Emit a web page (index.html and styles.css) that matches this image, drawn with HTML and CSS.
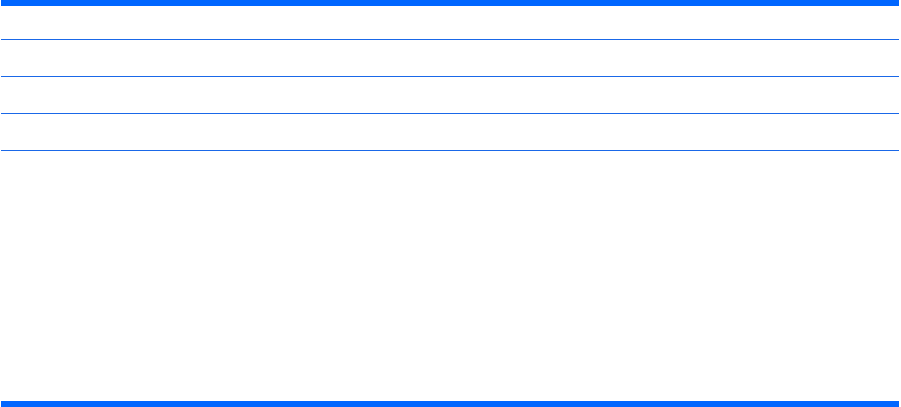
FILE: index.html
```html
<!DOCTYPE html>
<html lang="en">
<head>
<meta charset="utf-8">
<title>Table</title>
<link rel="stylesheet" href="styles.css">
</head>
<body>
<div class="page">
  <div class="bar"></div>
  <div class="grid">
    <div class="cell head"></div><div class="cell head"></div><div class="cell head"></div>
    <div class="cell"></div><div class="cell"></div><div class="cell"></div>
    <div class="cell"></div><div class="cell"></div><div class="cell"></div>
    <div class="cell"></div><div class="cell"></div><div class="cell"></div>
  </div>
  <div class="bar bottom"></div>
</div>
</body>
</html>
```
FILE: styles.css
```css
html, body {
  margin: 0;
  padding: 0;
  background: #ffffff;
  font-family: "Liberation Sans", Arial, sans-serif;
}
.page {
  box-sizing: border-box;
  width: 901px;
  height: 407px;
  padding: 0 2px 0 1px;
  display: flex;
  flex-direction: column;
}
.bar {
  height: 6px;
  background: #0066ff;
  flex: none;
}
.bottom {
  margin-top: auto;
}
.grid {
  display: grid;
  grid-template-columns: 204px 276px 1fr;
  column-gap: 0;
}
.cell {
  height: 36px;
  border-bottom: 1px solid #1a68e8;
}
.cell.head {
  height: 33px;
}
```
